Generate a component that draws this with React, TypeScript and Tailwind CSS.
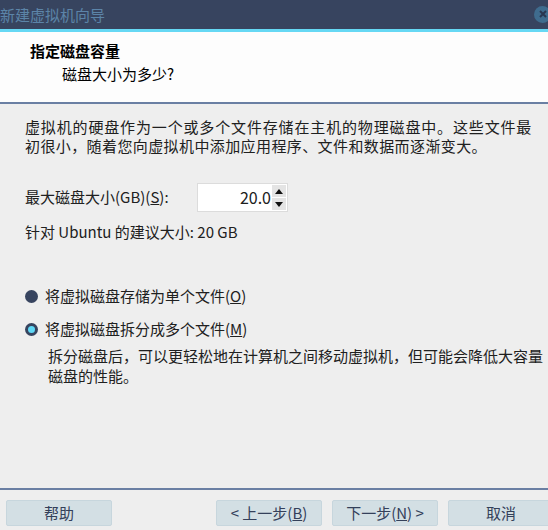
const font = "font-['Microsoft_YaHei','Noto_Sans_CJK_SC',sans-serif]";

function Radio({ checked, label, hotkey }: { checked: boolean; label: string; hotkey: string }) {
  return (
    <div className="flex items-center h-[20px]">
      <span className="w-[13px] h-[13px] rounded-full bg-[#37445f] flex items-center justify-center ml-[25px] mr-[7px]">
        {checked && <span className="w-[7px] h-[7px] rounded-full bg-[#5fd8f6]" />}
      </span>
      <span>
        {label}(<span className="underline">{hotkey}</span>)
      </span>
    </div>
  );
}

function Button({ children, className = "" }: { children: React.ReactNode; className?: string }) {
  return (
    <button
      className={`h-[26px] w-[106px] shrink-0 rounded-[2px] border border-[#c7d6dd] bg-[#d3dfe4] text-[#34405a] text-[15px] flex items-center justify-center ${className}`}
    >
      {children}
    </button>
  );
}

export default function App() {
  return (
    <div className={`w-[548px] h-[530px] bg-[#eeeeee] flex flex-col overflow-hidden text-[15px] text-[#202020] ${font}`}>
      {/* title bar */}
      <div className="h-[29px] bg-[#37445f] flex items-center justify-between">
        <span className="text-[#5c84a8] text-[15px] leading-none">新建虚拟机向导</span>
        <span className="w-[17px] h-[17px] rounded-full bg-[#3f6c8e] flex items-center justify-center -mr-[3px] mb-[1px]">
          <svg width="8" height="8" viewBox="0 0 8 8">
            <path d="M1 1L7 7M7 1L1 7" stroke="#2a3650" strokeWidth="2" />
          </svg>
        </span>
      </div>
      <div className="h-[3px] bg-[#66d8f4]" />

      {/* header */}
      <div className="h-[72px] bg-[#fdfdfd] border-b-2 border-[#6a7fa3] flex flex-col pt-[9px]">
        <div className="pl-[30px] font-bold text-black leading-[20px]">指定磁盘容量</div>
        <div className="pl-[62px] text-black leading-[20px] mt-[3px]">磁盘大小为多少?</div>
      </div>

      {/* body */}
      <div className="flex-1 flex flex-col">
        <div className="pl-[25px] pt-[13px] leading-[19px] whitespace-nowrap">
          <div className="tracking-[0.85px]">虚拟机的硬盘作为一个或多个文件存储在主机的物理磁盘中。这些文件最</div>
          <div className="tracking-[0.4px]">初很小，随着您向虚拟机中添加应用程序、文件和数据而逐渐变大。</div>
        </div>

        <div className="flex items-center mt-[28px] pl-[25px]">
          <span className="w-[172px]">
            最大磁盘大小(GB)(<span className="underline">S</span>):
          </span>
          <div className="w-[91px] h-[29px] bg-white border border-[#dcdcdc] flex items-stretch">
            <span className="flex-1 text-right pr-[1px] leading-[27px] text-[16px]">20.0</span>
            <div className="w-[15px] flex flex-col gap-[1px] py-[1px] pr-[1px]">
              <span className="flex-1 bg-[#e4e4e4] flex items-center justify-center">
                <svg width="8" height="5" viewBox="0 0 8 5"><path d="M4 0L8 5H0Z" fill="#111" /></svg>
              </span>
              <span className="flex-1 bg-[#e4e4e4] flex items-center justify-center">
                <svg width="8" height="5" viewBox="0 0 8 5"><path d="M0 0H8L4 5Z" fill="#111" /></svg>
              </span>
            </div>
          </div>
        </div>

        <div className="pl-[25px] mt-[10px] leading-[20px]">针对 Ubuntu 的建议大小: 20 GB</div>

        <div className="mt-[44px]">
          <Radio checked={false} label="将虚拟磁盘存储为单个文件" hotkey="O" />
        </div>
        <div className="mt-[13px]">
          <Radio checked={true} label="将虚拟磁盘拆分成多个文件" hotkey="M" />
        </div>
        <div className="pl-[48px] mt-[7px] leading-[20px] whitespace-nowrap">
          <div>拆分磁盘后，可以更轻松地在计算机之间移动虚拟机，但可能会降低大容量</div>
          <div>磁盘的性能。</div>
        </div>
      </div>

      {/* footer */}
      <div className="border-t-2 border-[#6a7fa3] h-[42px] flex items-start pt-[10px] pl-[6px]">
        <Button>帮助</Button>
        <Button className="ml-[104px]">
          &lt; 上一步(<span className="underline">B</span>)
        </Button>
        <Button className="ml-[10px]">
          下一步(<span className="underline">N</span>) &gt;
        </Button>
        <Button className="ml-[10px]">取消</Button>
      </div>
    </div>
  );
}
